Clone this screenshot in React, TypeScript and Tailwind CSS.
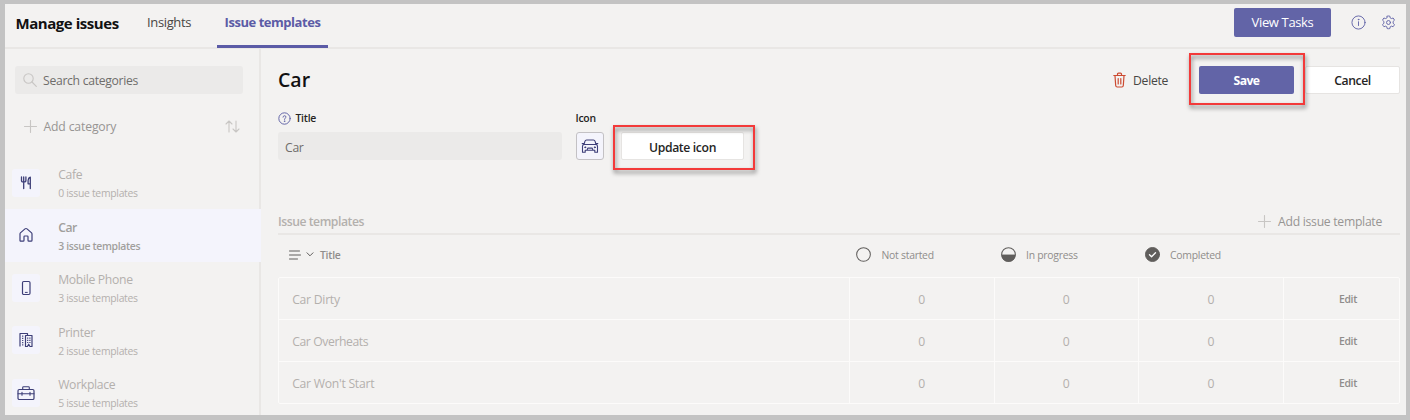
import type { ReactNode } from "react";

type IconProps = { className: string; children: ReactNode; box?: string };

function Svg({ className, children, box = "0 0 16 16" }: IconProps) {
  return (
    <svg viewBox={box} className={className} fill="none" stroke="currentColor" strokeLinecap="round" strokeLinejoin="round">
      {children}
    </svg>
  );
}

const CutleryIcon = () => (
  <Svg className="size-4">
    <path d="M3.500 2v3.500q0 1.600 2.200 1.600t2.200-1.600V2M5.700 2v11.500M12.300 13.500V2.200q-2.100.6-2.200 3.200v3.400h2.200" strokeWidth="1.300" />
  </Svg>
);
const HomeIcon = () => (
  <Svg className="size-4">
    <path d="M2 6.900q0-.6.400-1L7 1.900q1-.8 2 0l4.600 4q.4.4.4 1v6.400q0 .9-.9.900h-2.200q-.9 0-.9-.9V9.700q0-.7-.7-.7H6.700Q6 9 6 9.700v3.600q0 .9-.9.900H2.900Q2 14.200 2 13.300z" strokeWidth="1.200" />
  </Svg>
);
const PhoneIcon = () => (
  <Svg className="size-4">
    <rect x="4.500" y="1.500" width="7.500" height="13" rx="1.200" strokeWidth="1.200" />
    <path d="M7.300 12.400h2" />
  </Svg>
);
const BuildingsIcon = () => (
  <Svg className="size-4">
    <path d="M2 14.500V1.500h7.500V3.500M7.500 14.500v-11H14v11h-2l-1.300-2.300-1.300 2.300z" strokeWidth="1.200" strokeLinecap="butt" />
    <path d="M4.700 3.500v10M9.700 5.500v6.500M11.900 5.500v6.500" strokeWidth="1.200" strokeDasharray="1.200 1" strokeLinecap="butt" />
  </Svg>
);
const ToolboxIcon = () => (
  <Svg className="h-4 w-[18px]" box="0 0 18 16">
    <rect x="1" y="4.500" width="16" height="10" rx="1.300" strokeWidth="1.200" />
    <path d="M5.700 4.500V2.600q0-.9.900-.9h4.800q.9 0 .9.900v1.900M1 8.700h3.500M5.500 8.700h7M13.500 8.700H17M5 7.300v3M13 7.300v3" strokeWidth="1.100" />
  </Svg>
);
const CarIcon = () => (
  <Svg className="h-4 w-[18px]" box="0 0 18 16">
    <path d="M3 6.500 3.900 3.300Q4.300 2 5.600 2h6.800q1.300 0 1.700 1.300L15 6.500M1.200 5.600h1.900M14.900 5.600h1.900M3.500 6.500h11q2 0 2 2v5.700h-2.700v-1.900H4.200v1.900H1.500V8.500q0-2 2-2zM6 12.200l.8-2.100h4.400l.8 2.100" strokeWidth="1.100" />
    <circle cx="4.200" cy="9.300" r=".5" fill="currentColor" />
    <circle cx="13.800" cy="9.300" r=".5" fill="currentColor" />
  </Svg>
);
const PlusIcon = () => (
  <Svg className="size-[13px] shrink-0 text-[#c8c6c4]" box="0 0 13 13">
    <path d="M6.500.5v12M.5 6.500h12" strokeWidth="1.100" />
  </Svg>
);

const categories = [
  { name: "Cafe", count: 0, icon: <CutleryIcon /> },
  { name: "Car", count: 3, icon: <HomeIcon />, active: true },
  { name: "Mobile Phone", count: 3, icon: <PhoneIcon /> },
  { name: "Printer", count: 2, icon: <BuildingsIcon /> },
  { name: "Workplace", count: 5, icon: <ToolboxIcon /> },
];

const templates = ["Car Dirty", "Car Overheats", "Car Won't Start"];

function Header() {
  return (
    <header className="mr-[6px] flex h-[45px] shrink-0 items-start border-b-2 border-[#e9e7e5] pl-[10.500px]">
      <h1 className="mt-[9px] w-[131.500px] text-[15px] leading-5 font-bold tracking-[-0.450px] text-[#111]">Manage issues</h1>
      <span className="mt-[9px] w-[70px] text-[13px] leading-[19px] tracking-[-0.360px] text-[#484644]">Insights</span>
      <span className="flex h-[44px] w-[111px] shrink-0 justify-center border-b-[3px] border-[#5b5ba6] pt-[9px] text-[13px] leading-[19px] font-bold tracking-[-0.460px] whitespace-nowrap text-[#5b5ba6]">
        Issue templates
      </span>
      <div className="ml-auto flex items-center pt-[4px] text-[#6264a7]">
        <button className="h-[29px] w-[97px] rounded-[2px] bg-[#6264a7] pt-px text-[13px] tracking-[-0.350px] text-white">View Tasks</button>
        <Svg className="ml-[20px] size-[15px]">
          <circle cx="8" cy="8" r="7" />
          <path d="M8 7.200v4" />
          <circle cx="8" cy="4.900" r=".4" fill="currentColor" />
        </Svg>
        <Svg className="mr-[4px] ml-[15px] size-[15px]">
          <circle cx="8" cy="8" r="2.100" />
          <path d="M6.600 1.200q1.400-.3 2.800 0l.4 1.900 1.300.7 1.800-.6q1 1.100 1.400 2.400l-1.400 1.300v1.900l1.400 1.300q-.4 1.300-1.400 2.400l-1.800-.6-1.300.7-.4 1.900q-1.400.3-2.800 0l-.4-1.900-1.300-.7-1.800.6q-1-1.100-1.400-2.400l1.400-1.300V6.900L1.700 5.600q.4-1.300 1.400-2.400l1.800.6 1.300-.7z" />
        </Svg>
      </div>
    </header>
  );
}

function Sidebar() {
  return (
    <aside className="flex w-[256px] shrink-0 flex-col border-r-2 border-[#e9e7e5]">
      <div className="mt-[17px] ml-[10px] flex h-7 w-[228px] shrink-0 items-center gap-[6px] rounded-[3px] bg-[#ebeae9] pl-[8px] text-[#6f6d6b]">
        <Svg className="size-[14px] text-[#c8c6c4]" box="0 0 14 14">
          <circle cx="5.500" cy="5.500" r="4.700" strokeWidth="1.100" />
          <path d="m9 9 4.300 4.300" strokeWidth="1.200" />
        </Svg>
        <span className="pt-[3px] text-[12.200px] tracking-[-0.300px]">Search categories</span>
      </div>
      <div className="mt-[18px] flex h-7 shrink-0 items-center pl-[19px] text-[#979593]">
        <PlusIcon />
        <span className="ml-[6.500px] pt-[2px] text-[12.200px] tracking-[-0.150px]">Add category</span>
        <Svg className="mr-[19px] ml-auto h-[13px] w-[15px] text-[#c8c6c4]" box="0 0 15 13">
          <path d="M4 12V1M1 4l3-3 3 3M11 1v11M8 9l3 3 3-3" strokeWidth="1.100" />
        </Svg>
      </div>
      <nav className="mt-[16.500px] flex flex-col">
        {categories.map((c) => (
          <div
            key={c.name}
            className={`flex h-[52.500px] shrink-0 items-center pl-[7px] text-[#b3b0ad] ${c.active ? "-mr-[2px] bg-[#f4f4fc] font-semibold" : ""}`}
          >
            <span className="flex size-7 items-center justify-center rounded-[3px] bg-[#f4f4fc] text-[#3d3e78]">{c.icon}</span>
            <span className="ml-[18.200px] flex flex-col pt-[3px]">
              <span className={`text-[12.200px] leading-[18px] ${c.active ? "text-[#a19f9d] tracking-[-0.500px]" : "tracking-[-0.320px]"}`}>{c.name}</span>
              <span className={`text-[10.400px] leading-[18px] ${c.active ? "text-[#a19f9d] tracking-[-0.320px]" : "tracking-[-0.290px]"}`}>
                {c.count} issue templates
              </span>
            </span>
          </div>
        ))}
      </nav>
    </aside>
  );
}

const highlight = "pointer-events-none absolute border-2 border-[#f33a3a] drop-shadow-[1px_3px_2px_rgba(0,0,0,0.5)]";

function EditForm() {
  return (
    <section className="flex h-[147px] shrink-0 flex-col">
      <div className="flex h-[29px] items-center">
        <h2 className="text-[19.500px] leading-7 font-semibold text-[#111]">Car</h2>
        <div className="ml-auto flex items-center">
          <Svg className="h-[16px] w-[13px] text-[#cc4a31]" box="0 0 13 16">
            <path d="M.8 3.500h11.400M4.500 3.200V2.100q0-1 1-1h2q1 0 1 1v1.100M2 3.700l.7 9.800q.1 1.500 1.500 1.500h4.600q1.400 0 1.500-1.500l.7-9.800M5.200 6.500v5.500M7.800 6.500v5.500" strokeWidth="1.200" />
          </Svg>
          <span className="ml-[7px] w-[66px] pt-[3px] text-[12.200px] tracking-[-0.280px] text-[#484644]">Delete</span>
          <div className="relative">
            <button className="h-7 w-[95px] rounded-[2px] bg-[#6264a7] pt-[3px] text-[12.200px] font-bold tracking-[-0.550px] text-white">Save</button>
            <div className={`${highlight} -top-[13px] -left-[10px] h-[52px] w-[116px]`} />
          </div>
          <button className="ml-[11px] h-7 w-[95px] rounded-[2px] border border-[#e6e4e2] bg-white pt-[3px] text-[12.200px] font-semibold tracking-[-0.400px] text-[#252423]">
            Cancel
          </button>
        </div>
      </div>
      <div className="mt-[14px] flex text-[#252423]">
        <div className="flex w-[297.500px] flex-col">
          <div className="flex h-[21px] items-center gap-[4.500px]">
            <Svg className="size-[13px] text-[#6264a7]">
              <circle cx="8" cy="8" r="7" strokeWidth="1.200" />
              <path d="M6.200 6.300q.1-1.700 1.800-1.700 1.800 0 1.800 1.600 0 .8-.9 1.400-.9.600-.9 1.500" strokeWidth="1.200" />
              <circle cx="8" cy="11.300" r=".4" fill="currentColor" />
            </Svg>
            <span className="pt-px text-[10.400px] font-semibold tracking-[-0.250px]">Title</span>
          </div>
          <div className="mt-[3px] flex h-7 w-[284px] items-center rounded-[3px] bg-[#ebeae9] pt-[4px] pl-[7px] text-[12.200px] tracking-[-0.300px] text-[#6f6d6b]">Car</div>
        </div>
        <div className="flex flex-col">
          <span className="flex h-[21px] items-center pt-px text-[10.400px] font-semibold tracking-[-0.250px]">Icon</span>
          <div className="mt-[3px] flex items-center">
            <span className="flex size-[28px] items-center justify-center rounded-[3px] border border-[#c3c1c4] bg-[#f4f4fc] text-[#3d3e78]">
              <CarIcon />
            </span>
            <div className="relative ml-[17.500px]">
              <button className="h-7 w-[123px] rounded-[2px] border border-[#e6e4e2] bg-white pt-[4px] text-[12.200px] font-semibold tracking-[-0.350px]">
                Update icon
              </button>
              <div className={`${highlight} -top-[7px] -left-[8px] h-[45px] w-[142px]`} />
            </div>
          </div>
        </div>
      </div>
    </section>
  );
}

function TemplatesTable() {
  return (
    <section className="flex flex-col text-[#a19f9d]">
      <div className="flex h-[23px] items-start border-b-2 border-[#e9e7e5]">
        <h3 className="pt-px text-[12.200px] leading-[18px] font-semibold tracking-[-0.460px] text-[#b3b0ad]">Issue templates</h3>
        <div className="mr-[18px] ml-auto flex items-center gap-[7px] text-[#979593]">
          <PlusIcon />
          <span className="pt-px text-[12.200px] leading-[18px] tracking-[-0.280px]">Add issue template</span>
        </div>
      </div>
      <div className="grid h-[43px] grid-cols-[571px_144.500px_144.500px_145px_1fr] items-center pb-[3px] text-[10.400px] tracking-[-0.250px] text-[#8f8d8b]">
        <div className="flex items-center pl-[11px]">
          <Svg className="h-[10px] w-[12px] text-[#605e5c]" box="0 0 12 10">
            <path d="M.5 1h10M.5 5h11M.5 9h8" strokeWidth="1" />
          </Svg>
          <Svg className="ml-[5px] h-[5px] w-[8px] text-[#605e5c]" box="0 0 8 5">
            <path d="m1 .8 3 3 3-3" />
          </Svg>
          <span className="ml-[6px] pt-px font-semibold">Title</span>
        </div>
        <div className="flex items-center gap-[10.500px] pl-[7px]">
          <Svg className="size-[15px] text-[#605e5c]">
            <circle cx="8" cy="8" r="7.300" strokeWidth="1.100" />
          </Svg>
          <span className="pt-px">Not started</span>
        </div>
        <div className="flex items-center gap-[10px] pl-[7.500px]">
          <Svg className="size-[15px] text-[#605e5c]">
            <circle cx="8" cy="8" r="7.300" strokeWidth="1.100" />
            <path d="M.7 8.500a7.300 7.300 0 0 0 14.600 0z" fill="currentColor" strokeWidth=".5" />
          </Svg>
          <span className="pt-px">In progress</span>
        </div>
        <div className="flex items-center gap-[10px] pl-[7px]">
          <Svg className="size-[15px] text-[#605e5c]">
            <circle cx="8" cy="8" r="7.500" fill="currentColor" />
            <path d="m4.800 8.200 2.200 2.200 4.200-4.300" stroke="#fff" strokeWidth="1.400" />
          </Svg>
          <span className="pt-px">Completed</span>
        </div>
      </div>
      <div className="-mt-px flex flex-col rounded-[2px] border border-[#fcfbfa]">
        {templates.map((name, i) => (
          <div
            key={name}
            className={`grid grid-cols-[571px_144.500px_144.500px_145px_1fr] items-stretch divide-x divide-[#fcfbfa] text-center text-[12.200px] text-[#b3b0ad] ${i < 2 ? "h-[42px] border-b border-[#fcfbfa]" : "h-[41px]"}`}
          >
            <div className={`flex items-center pt-[3px] pl-[13.200px] ${i === 1 ? "tracking-[-0.400px]" : "tracking-[-0.260px]"}`}>{name}</div>
            <div className="flex items-center justify-center pt-[3px]">0</div>
            <div className="flex items-center justify-center pt-[3px]">0</div>
            <div className="flex items-center justify-center pt-[3px]">0</div>
            <div className="flex items-center justify-center pt-[3px] pl-[13px] text-[10.400px] font-semibold tracking-[-0.300px] text-[#8f8d8b]">Edit</div>
          </div>
        ))}
      </div>
    </section>
  );
}

export default function App() {
  return (
    <div className="h-[420px] w-[1410px] overflow-hidden bg-[#c3c3c3] pt-[4px] pr-[4px] pb-[5px] pl-[5px] font-['Open_Sans',sans-serif]">
      <div className="flex h-full flex-col overflow-hidden bg-[#f3f2f1]">
        <Header />
        <div className="flex min-h-0 flex-1">
          <Sidebar />
          <main className="flex flex-1 flex-col pt-[16px] pr-[6px] pl-[17px]">
            <EditForm />
            <TemplatesTable />
          </main>
        </div>
      </div>
    </div>
  );
}
